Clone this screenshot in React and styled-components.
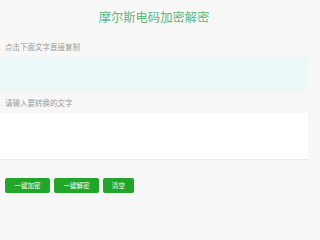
import React from 'react';
import styled, { createGlobalStyle } from 'styled-components';

const GlobalStyle = createGlobalStyle`
  html, body {
    margin: 0;
    padding: 0;
    background: #f7f7f7;
  }
  body {
    font-family: "Noto Sans CJK SC", "Noto Sans", sans-serif;
  }
`;

const Page = styled.div`
  width: 308px;
  height: 211px;
  background: #f7f7f7;
  display: flex;
  flex-direction: column;
`;

const Title = styled.h1`
  margin: 0;
  padding-top: 10px;
  height: 36px;
  box-sizing: border-box;
  text-align: center;
  font-size: 12.3px;
  font-weight: 400;
  line-height: 14px;
  color: #5fb67e;
  font-family: "Noto Sans CJK SC", serif;
`;

const Label = styled.div`
  padding: 0 5px;
  height: 21px;
  display: flex;
  align-items: center;
  font-size: 7.5px;
  color: #9a9a9a;
`;

const ResultBox = styled.div`
  height: 35px;
  background: #eaf9f8;
`;

const InputBox = styled.textarea`
  display: block;
  width: 100%;
  height: 47px;
  box-sizing: border-box;
  margin: 0;
  padding: 0;
  border: none;
  border-bottom: 1px solid #ececec;
  background: #fff;
  resize: none;
  outline: none;
`;

const Buttons = styled.div`
  display: flex;
  gap: 4px;
  padding: 18px 5px 0;
`;

const Button = styled.button`
  width: ${p => p.$w}px;
  height: 15px;
  padding: 0;
  border: none;
  border-radius: 2px;
  background: #21a629;
  color: #fff;
  font-family: "Noto Sans CJK SC", sans-serif;
  font-size: 6.5px;
  line-height: 15px;
  white-space: nowrap;
  cursor: pointer;
`;

export default function App() {
  return (
    <Page>
      <GlobalStyle />
      <Title>摩尔斯电码加密解密</Title>
      <Label>点击下面文字直接复制</Label>
      <ResultBox />
      <Label>请输入要转换的文字</Label>
      <InputBox />
      <Buttons>
        <Button $w={45}>一键加密</Button>
        <Button $w={45}>一键解密</Button>
        <Button $w={31}>清空</Button>
      </Buttons>
    </Page>
  );
}
